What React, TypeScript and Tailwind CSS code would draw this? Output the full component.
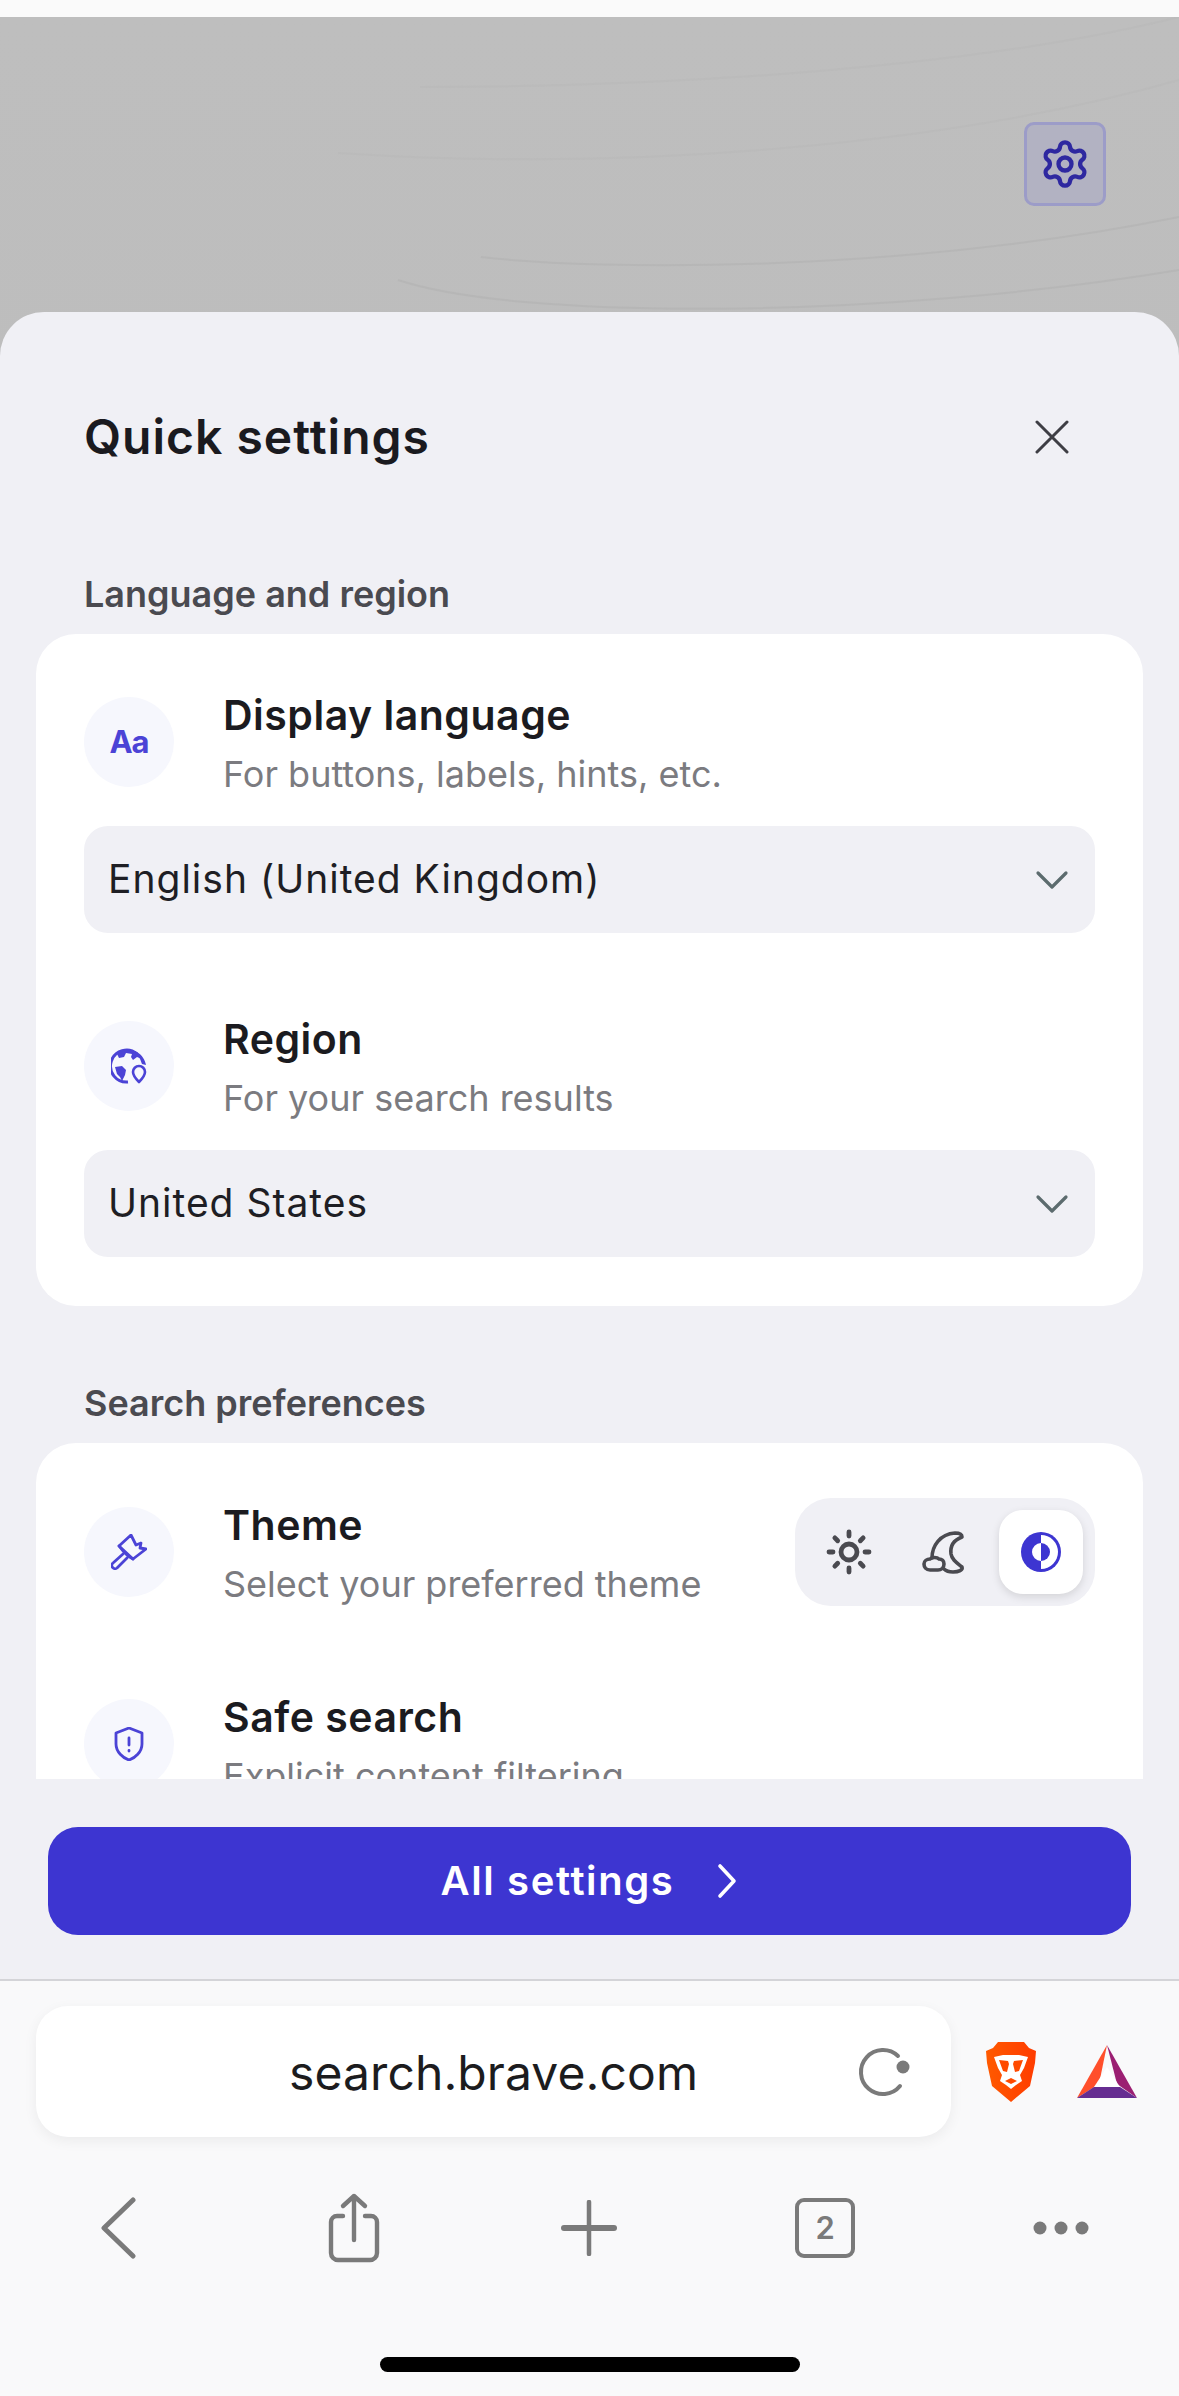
import { Settings, Sun } from "lucide-react";

function Chevron() {
  return (
    <svg width="34" height="20" viewBox="0 0 34 20" fill="none" stroke="#5c6b6e" strokeWidth="3.2" strokeLinecap="round" strokeLinejoin="round">
      <path d="M3 3l14 14L31 3" />
    </svg>
  );
}

function IconCircle({ children }: { children: React.ReactNode }) {
  return (
    <div className="flex h-[90px] w-[90px] shrink-0 items-center justify-center rounded-full bg-[#f6f7fd]">
      {children}
    </div>
  );
}

function Row({ icon, title, sub, children }: { icon: React.ReactNode; title: string; sub: string; children?: React.ReactNode }) {
  return (
    <div className="flex h-[90px] items-center">
      <IconCircle>{icon}</IconCircle>
      <div className="ml-[49px] flex-1 pt-[6px]">
        <div className="text-[41px] leading-[58px] font-semibold tracking-[0.5px] text-[#1b1b20]">{title}</div>
        <div className="text-[36px] leading-[60px] text-[#7b7b80]">{sub}</div>
      </div>
      {children}
    </div>
  );
}

function SelectBox({ value }: { value: string }) {
  return (
    <div className="mt-[39px] flex h-[107px] items-center justify-between rounded-[24px] bg-[#f0f0f5] pr-[26px] pl-[24px]">
      <span className="text-[39px] tracking-[1px] text-[#1e1e24]">{value}</span>
      <Chevron />
    </div>
  );
}

function SectionLabel({ text, top }: { text: string; top: string }) {
  return (
    <div className={`px-[48px] text-[36px] leading-[44px] font-semibold text-[#4a4a50] ${top}`}>
      {text}
    </div>
  );
}

export default function App() {
  return (
    <div className="flex h-[2396px] w-[1179px] flex-col overflow-hidden bg-[#fafafb] font-['Inter',sans-serif]">
      {/* top strip */}
      <div className="h-[17px] shrink-0 bg-[#fafafa]" />

      {/* dimmed page + sheet */}
      <div className="relative flex h-[1964px] shrink-0 flex-col bg-gradient-to-b from-[#bebebe] to-[#b9b9b9]">
        <svg className="absolute top-0 left-0" width="1179" height="295" fill="none" stroke="#b3b3b3" strokeWidth="2">
          <path d="M481 240c120 14 420 16 698-40" opacity="0.7" />
          <path d="M398 263c120 40 480 40 781-10" opacity="0.7" />
          <path d="M338 136c300 20 620-10 841-73" opacity="0.25" />
          <path d="M420 70c260 0 560-20 759-70" opacity="0.25" />
        </svg>

        <div className="relative flex h-[295px] shrink-0 justify-end pt-[105px] pr-[73px]">
          <div className="flex h-[84px] w-[82px] items-center justify-center rounded-[10px] border-[3px] border-[#9c9cc8] bg-[#b2b2c2]">
            <Settings size={52} color="#2e28a0" strokeWidth={2} />
          </div>
        </div>

        {/* sheet */}
        <div className="relative flex h-[1669px] flex-col rounded-t-[44px] border-b-2 border-[#d4d4d8] bg-[#f0f0f5] pt-[80px]">
          <div className="flex h-[90px] shrink-0 items-center justify-between pr-[110px] pl-[84px]">
            <span className="text-[48px] font-semibold tracking-[1px] text-[#1a1a1f]">Quick settings</span>
            <svg width="34" height="34" viewBox="0 0 34 34" fill="none" stroke="#3e3e44" strokeWidth="3" strokeLinecap="round">
              <path d="M2 2l30 30M32 2L2 32" />
            </svg>
          </div>

          <div className="h-[1297px] shrink-0 overflow-hidden px-[36px]">
            <SectionLabel text="Language and region" top="mt-[90px]" />
            <div className="mt-[18px] rounded-[40px] bg-white px-[48px] pt-[63px] pb-[49px]">
              <Row
                title="Display language"
                sub="For buttons, labels, hints, etc."
                icon={<span className="text-[31px] font-bold tracking-[-1px] text-[#4b43d6]">Aa</span>}
              />
              <SelectBox value="English (United Kingdom)" />
              <div className="h-[88px]" />
              <Row
                title="Region"
                sub="For your search results"
                icon={
                  <svg width="36" height="36" viewBox="0 0 36 36" fill="none">
                    <path d="M26 6A16 16 0 1 0 17 34" stroke="#4b43d6" strokeWidth="3" />
                    <path d="M6 6c5-4 14-5 20-2 5 3 8 8 9 13l-4-1c-2-4-1-6-5-7l-4 3-2-3 1-3-6-1-2 4-5 1z" fill="#4b43d6" />
                    <path d="M4 19l7-1 4 4-1 5-3 6-2-4-3-3z" fill="#4b43d6" />
                    <path d="M28 34c-4-4-6-7-6-10a6 6 0 0 1 12 0c0 3-2 6-6 10z" stroke="#4b43d6" strokeWidth="2.6" strokeLinejoin="round" />
                  </svg>
                }
              />
              <SelectBox value="United States" />
            </div>

            <SectionLabel text="Search preferences" top="mt-[75px]" />
            <div className="mt-[18px] rounded-t-[40px] bg-white px-[48px] pt-[64px]">
              <Row
                title="Theme"
                sub="Select your preferred theme"
                icon={
                  <svg width="36" height="36" viewBox="0 0 36 36" fill="none" stroke="#4b43d6" strokeWidth="2.8" strokeLinejoin="round" strokeLinecap="round">
                    <path d="M20 1L8 12l4 5 5 5 5 3L35 15l-6-1 1-5-5 2z" />
                    <path d="M8 12l14 13" />
                    <path d="M12 20L2 29a3 3 0 0 0 4 5l10-10" />
                  </svg>
                }
              >
                <div className="flex h-[108px] w-[300px] shrink-0 items-center rounded-[36px] bg-[#f0f0f5] pl-[30px]">
                  <Sun size={48} color="#4a4a50" strokeWidth={2.4} />
                  <svg className="ml-[46px]" width="48" height="48" viewBox="-4 -4 48 48" fill="none" stroke="#4a4a50" strokeWidth="3.6" strokeLinecap="round" strokeLinejoin="round">
                    <path d="M9 26C9 14 17 2 32 1c4 0 7 1 7 4-8 3-12 9-11 17 1 6 6 9 11 13 1 3-3 5-9 5-4 0-7-1-9-3" />
                    <path d="M7 38c-4 0-6-3-6-6s3-5 6-5c2-2 7-2 9 0 3 0 5 2 5 5 0 4-3 6-6 6z" />
                  </svg>
                  <div className="ml-[32px] flex h-[84px] w-[84px] items-center justify-center rounded-[24px] bg-white shadow-[0_3px_8px_rgba(0,0,0,0.12)]">
                    <svg width="42" height="42" viewBox="0 0 42 42">
                      <circle cx="21" cy="21" r="20" fill="#3d35d1" />
                      <path d="M21 4a17 17 0 0 1 0 34z" fill="#fff" />
                      <path d="M21 12a9 9 0 0 0 0 18z" fill="#fff" />
                      <path d="M21 12a9 9 0 0 1 0 18z" fill="#3d35d1" />
                    </svg>
                  </div>
                </div>
              </Row>
              <div className="h-[102px]" />
              <Row
                title="Safe search"
                sub="Explicit content filtering"
                icon={
                  <svg width="30" height="34" viewBox="0 0 30 34" fill="none" stroke="#4b43d6" strokeWidth="2.8" strokeLinecap="round" strokeLinejoin="round">
                    <path d="M15 1l13 5v11c0 8-7 14-13 16C9 31 2 25 2 17V6z" />
                    <path d="M15 11v7M15 23.5v.5" />
                  </svg>
                }
              />
            </div>
          </div>

          <div className="mx-[48px] mt-[48px] flex h-[108px] items-center justify-center rounded-[30px] bg-[#3d35d1]">
            <span className="text-[40px] font-semibold tracking-[1.6px] text-white">All settings</span>
            <svg className="ml-[42px]" width="22" height="36" viewBox="0 0 22 36" fill="none" stroke="#fff" strokeWidth="3.6" strokeLinecap="round" strokeLinejoin="round">
              <path d="M4 3l14 15L4 33" />
            </svg>
          </div>
        </div>
      </div>

      {/* browser toolbar */}
      <div className="flex flex-1 flex-col bg-[#f9f9fa]">
        <div className="mt-[25px] flex h-[131px] items-center pl-[36px]">
          <div className="flex h-[131px] w-[915px] items-center rounded-[32px] bg-white pl-[94px] shadow-[0_4px_14px_rgba(0,0,0,0.06)]">
            <span className="flex-1 pt-[2px] text-center text-[48px] tracking-[0.1px] text-[#1c1c1e]">search.brave.com</span>
            <svg className="mr-[40px]" width="54" height="50" viewBox="0 0 54 50" fill="none">
              <path d="M43 39A22 22 0 1 1 41 9" stroke="#7a7a7a" strokeWidth="4" strokeLinecap="round" />
              <circle cx="46" cy="20" r="6.5" fill="#7a7a7a" />
            </svg>
          </div>
          <svg className="ml-[35px]" width="50" height="60" viewBox="0 0 50 60">
            <defs>
              <linearGradient id="lion" x1="0" y1="0" x2="1" y2="0">
                <stop offset="0" stopColor="#ff5a00" />
                <stop offset="1" stopColor="#ff3c00" />
              </linearGradient>
            </defs>
            <path d="M12 0h26l5 6 7 3-1 12-5 23-19 16L6 44 1 21 0 9l7-3z" fill="url(#lion)" />
            <path d="M8 15l9-2h16l9 2-4 11-4 7 2 6-6 4-5 4-5-4-6-4 2-6-4-7z" fill="#fff" />
            <path d="M13 18l9 1 1 3-2 8-4-1zM37 18l-9 1-1 3 2 8 4-1z" fill="#ff4a00" />
            <path d="M19 39l6-3 6 3-6 3z" fill="#ff4a00" />
          </svg>
          <svg className="ml-[41px]" width="60" height="54" viewBox="0 0 60 54">
            <path d="M30 0L0 53l22-14 8-39z" fill="#ff4f2b" />
            <path d="M30 0l30 53-20-14L30 0z" fill="#9b1f72" />
            <path d="M0 53h60L43 42H17z" fill="#662d91" />
            <path d="M30 22l13 20H17z" fill="#fff" />
          </svg>
        </div>

        <div className="mt-[56px] grid h-[70px] grid-cols-5 items-center justify-items-center">
          <svg width="36" height="62" viewBox="0 0 36 62" fill="none" stroke="#7a7a7a" strokeWidth="5" strokeLinecap="round" strokeLinejoin="round">
            <path d="M33 3L4 31l29 28" />
          </svg>
          <svg width="52" height="70" viewBox="0 0 52 70" fill="none" stroke="#7a7a7a" strokeWidth="4.4" strokeLinecap="round" strokeLinejoin="round">
            <path d="M26 3v44M15 13L26 3l11 10" />
            <path d="M15 23H9a6 6 0 0 0-6 6v31a7 7 0 0 0 7 7h32a7 7 0 0 0 7-7V29a6 6 0 0 0-6-6h-6" />
          </svg>
          <svg width="56" height="56" viewBox="0 0 56 56" fill="none" stroke="#7a7a7a" strokeLinecap="round">
            <path d="M28 2v52" strokeWidth="4.5" />
            <path d="M3 28h50" strokeWidth="6" />
          </svg>
          <div className="flex h-[60px] w-[60px] items-center justify-center rounded-[9px] border-[4px] border-[#7a7a7a] text-[31px] font-semibold text-[#7a7a7a]">
            2
          </div>
          <svg width="56" height="14" viewBox="0 0 56 14" fill="#7a7a7a">
            <circle cx="7" cy="7" r="6.5" />
            <circle cx="28" cy="7" r="6.5" />
            <circle cx="49" cy="7" r="6.5" />
          </svg>
        </div>

        <div className="mx-auto mt-[94px] h-[15px] w-[420px] rounded-full bg-black" />
      </div>
    </div>
  );
}
